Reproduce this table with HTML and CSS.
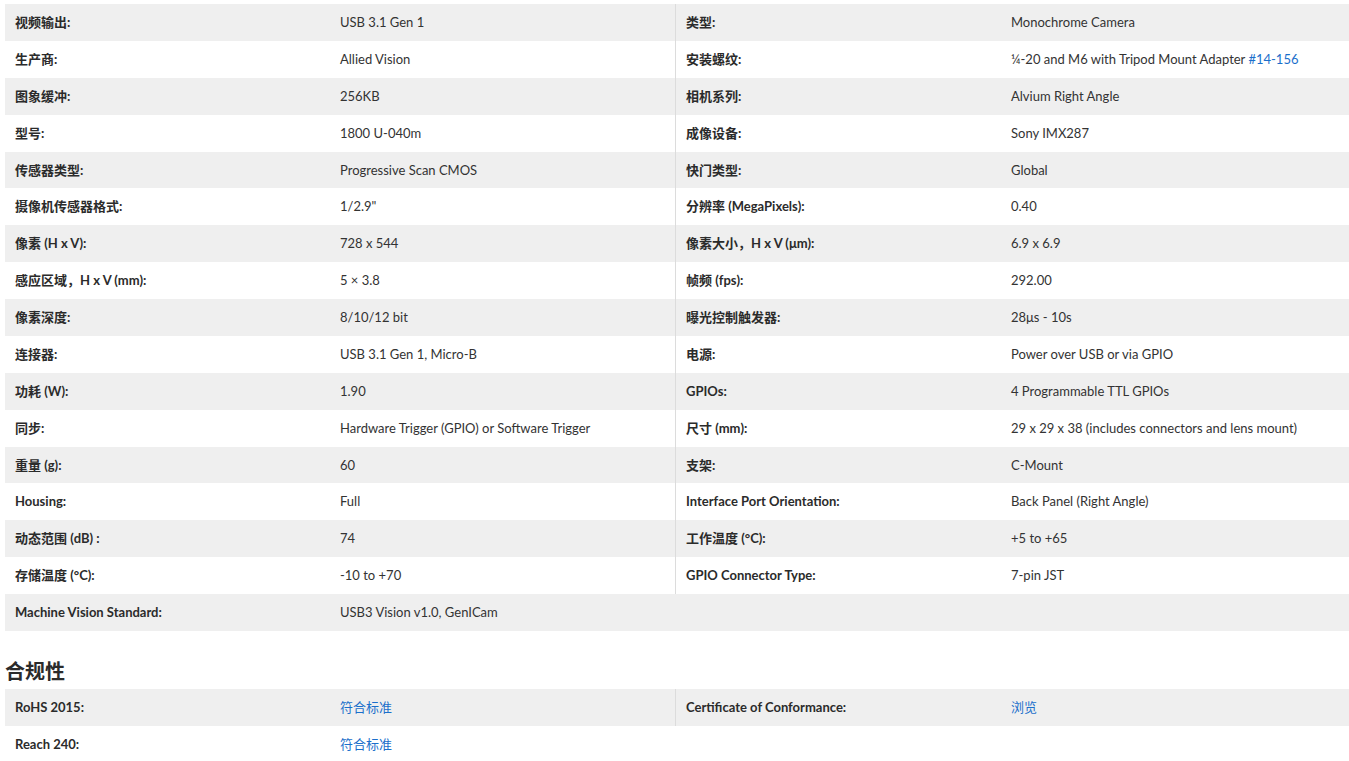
FILE: index.html
```html
<!DOCTYPE html>
<html lang="zh">
<head>
<meta charset="utf-8">
<title>Specs</title>
<link rel="stylesheet" href="styles.css">
</head>
<body>
<div class="page">
  <div class="specs">
    <div class="row"><div class="lbl">视频输出:</div><div class="val">USB 3.1 Gen 1</div><div class="lbl lbl-r">类型:</div><div class="val">Monochrome Camera</div></div>
    <div class="row"><div class="lbl">生产商:</div><div class="val">Allied Vision</div><div class="lbl lbl-r">安装螺纹:</div><div class="val">¼-20 and M6 with Tripod Mount Adapter <a href="#">#14-156</a></div></div>
    <div class="row"><div class="lbl">图象缓冲:</div><div class="val">256KB</div><div class="lbl lbl-r">相机系列:</div><div class="val">Alvium Right Angle</div></div>
    <div class="row"><div class="lbl">型号:</div><div class="val">1800 U-040m</div><div class="lbl lbl-r">成像设备:</div><div class="val">Sony IMX287</div></div>
    <div class="row"><div class="lbl">传感器类型:</div><div class="val">Progressive Scan CMOS</div><div class="lbl lbl-r">快门类型:</div><div class="val">Global</div></div>
    <div class="row"><div class="lbl">摄像机传感器格式:</div><div class="val">1/2.9"</div><div class="lbl lbl-r">分辨率 (MegaPixels):</div><div class="val">0.40</div></div>
    <div class="row"><div class="lbl">像素 (H x V):</div><div class="val">728 x 544</div><div class="lbl lbl-r">像素大小，H x V (μm):</div><div class="val">6.9 x 6.9</div></div>
    <div class="row"><div class="lbl">感应区域，H x V (mm):</div><div class="val">5 × 3.8</div><div class="lbl lbl-r">帧频 (fps):</div><div class="val">292.00</div></div>
    <div class="row"><div class="lbl">像素深度:</div><div class="val">8/10/12 bit</div><div class="lbl lbl-r">曝光控制触发器:</div><div class="val">28μs - 10s</div></div>
    <div class="row"><div class="lbl">连接器:</div><div class="val">USB 3.1 Gen 1, Micro-B</div><div class="lbl lbl-r">电源:</div><div class="val">Power over USB or via GPIO</div></div>
    <div class="row"><div class="lbl">功耗 (W):</div><div class="val">1.90</div><div class="lbl lbl-r">GPIOs:</div><div class="val">4 Programmable TTL GPIOs</div></div>
    <div class="row"><div class="lbl">同步:</div><div class="val">Hardware Trigger (GPIO) or Software Trigger</div><div class="lbl lbl-r">尺寸 (mm):</div><div class="val">29 x 29 x 38 (includes connectors and lens mount)</div></div>
    <div class="row"><div class="lbl">重量 (g):</div><div class="val">60</div><div class="lbl lbl-r">支架:</div><div class="val">C-Mount</div></div>
    <div class="row"><div class="lbl">Housing:</div><div class="val">Full</div><div class="lbl lbl-r">Interface Port Orientation:</div><div class="val">Back Panel (Right Angle)</div></div>
    <div class="row"><div class="lbl">动态范围 (dB) :</div><div class="val">74</div><div class="lbl lbl-r">工作温度 (°C):</div><div class="val">+5 to +65</div></div>
    <div class="row"><div class="lbl">存储温度 (°C):</div><div class="val">-10 to +70</div><div class="lbl lbl-r">GPIO Connector Type:</div><div class="val">7-pin JST</div></div>
    <div class="row"><div class="lbl">Machine Vision Standard:</div><div class="val">USB3 Vision v1.0, GenICam</div></div>
  </div>

  <h2 class="section-title">合规性</h2>
  <div class="specs">
    <div class="row"><div class="lbl">RoHS 2015:</div><div class="val"><a href="#">符合标准</a></div><div class="lbl lbl-r">Certificate of Conformance:</div><div class="val"><a href="#">浏览</a></div></div>
    <div class="row"><div class="lbl">Reach 240:</div><div class="val"><a href="#">符合标准</a></div></div>
  </div>
</div>
</body>
</html>
```

FILE: styles.css
```css
html, body {
  margin: 0;
  padding: 0;
  background: #ffffff;
}

body {
  font-family: "Lato", "Noto Sans CJK SC", sans-serif;
  font-size: 13px;
  color: #333333;
}

.page {
  padding: 4px 0 0 5px;
}

.specs {
  display: flex;
  flex-direction: column;
}

.row {
  display: grid;
  grid-template-columns: 325px 345px 326px 1fr;
}

.row:nth-child(odd) {
  background: #efefef;
}

.lbl,
.val {
  padding: 10px 10px;
  line-height: 16.875px;
  box-sizing: border-box;
  white-space: nowrap;
}

.lbl {
  font-weight: 700;
  color: #2b2b2b;
}

.lbl-r {
  border-left: 1px solid #dcdcdc;
}

.val {
  font-weight: 400;
}

.val a {
  color: #1b6fcb;
  text-decoration: none;
}

.section-title {
  margin: 28px 0 6px 0;
  font-size: 20px;
  line-height: 24px;
  font-weight: 700;
  color: #2b2b2b;
}
```
